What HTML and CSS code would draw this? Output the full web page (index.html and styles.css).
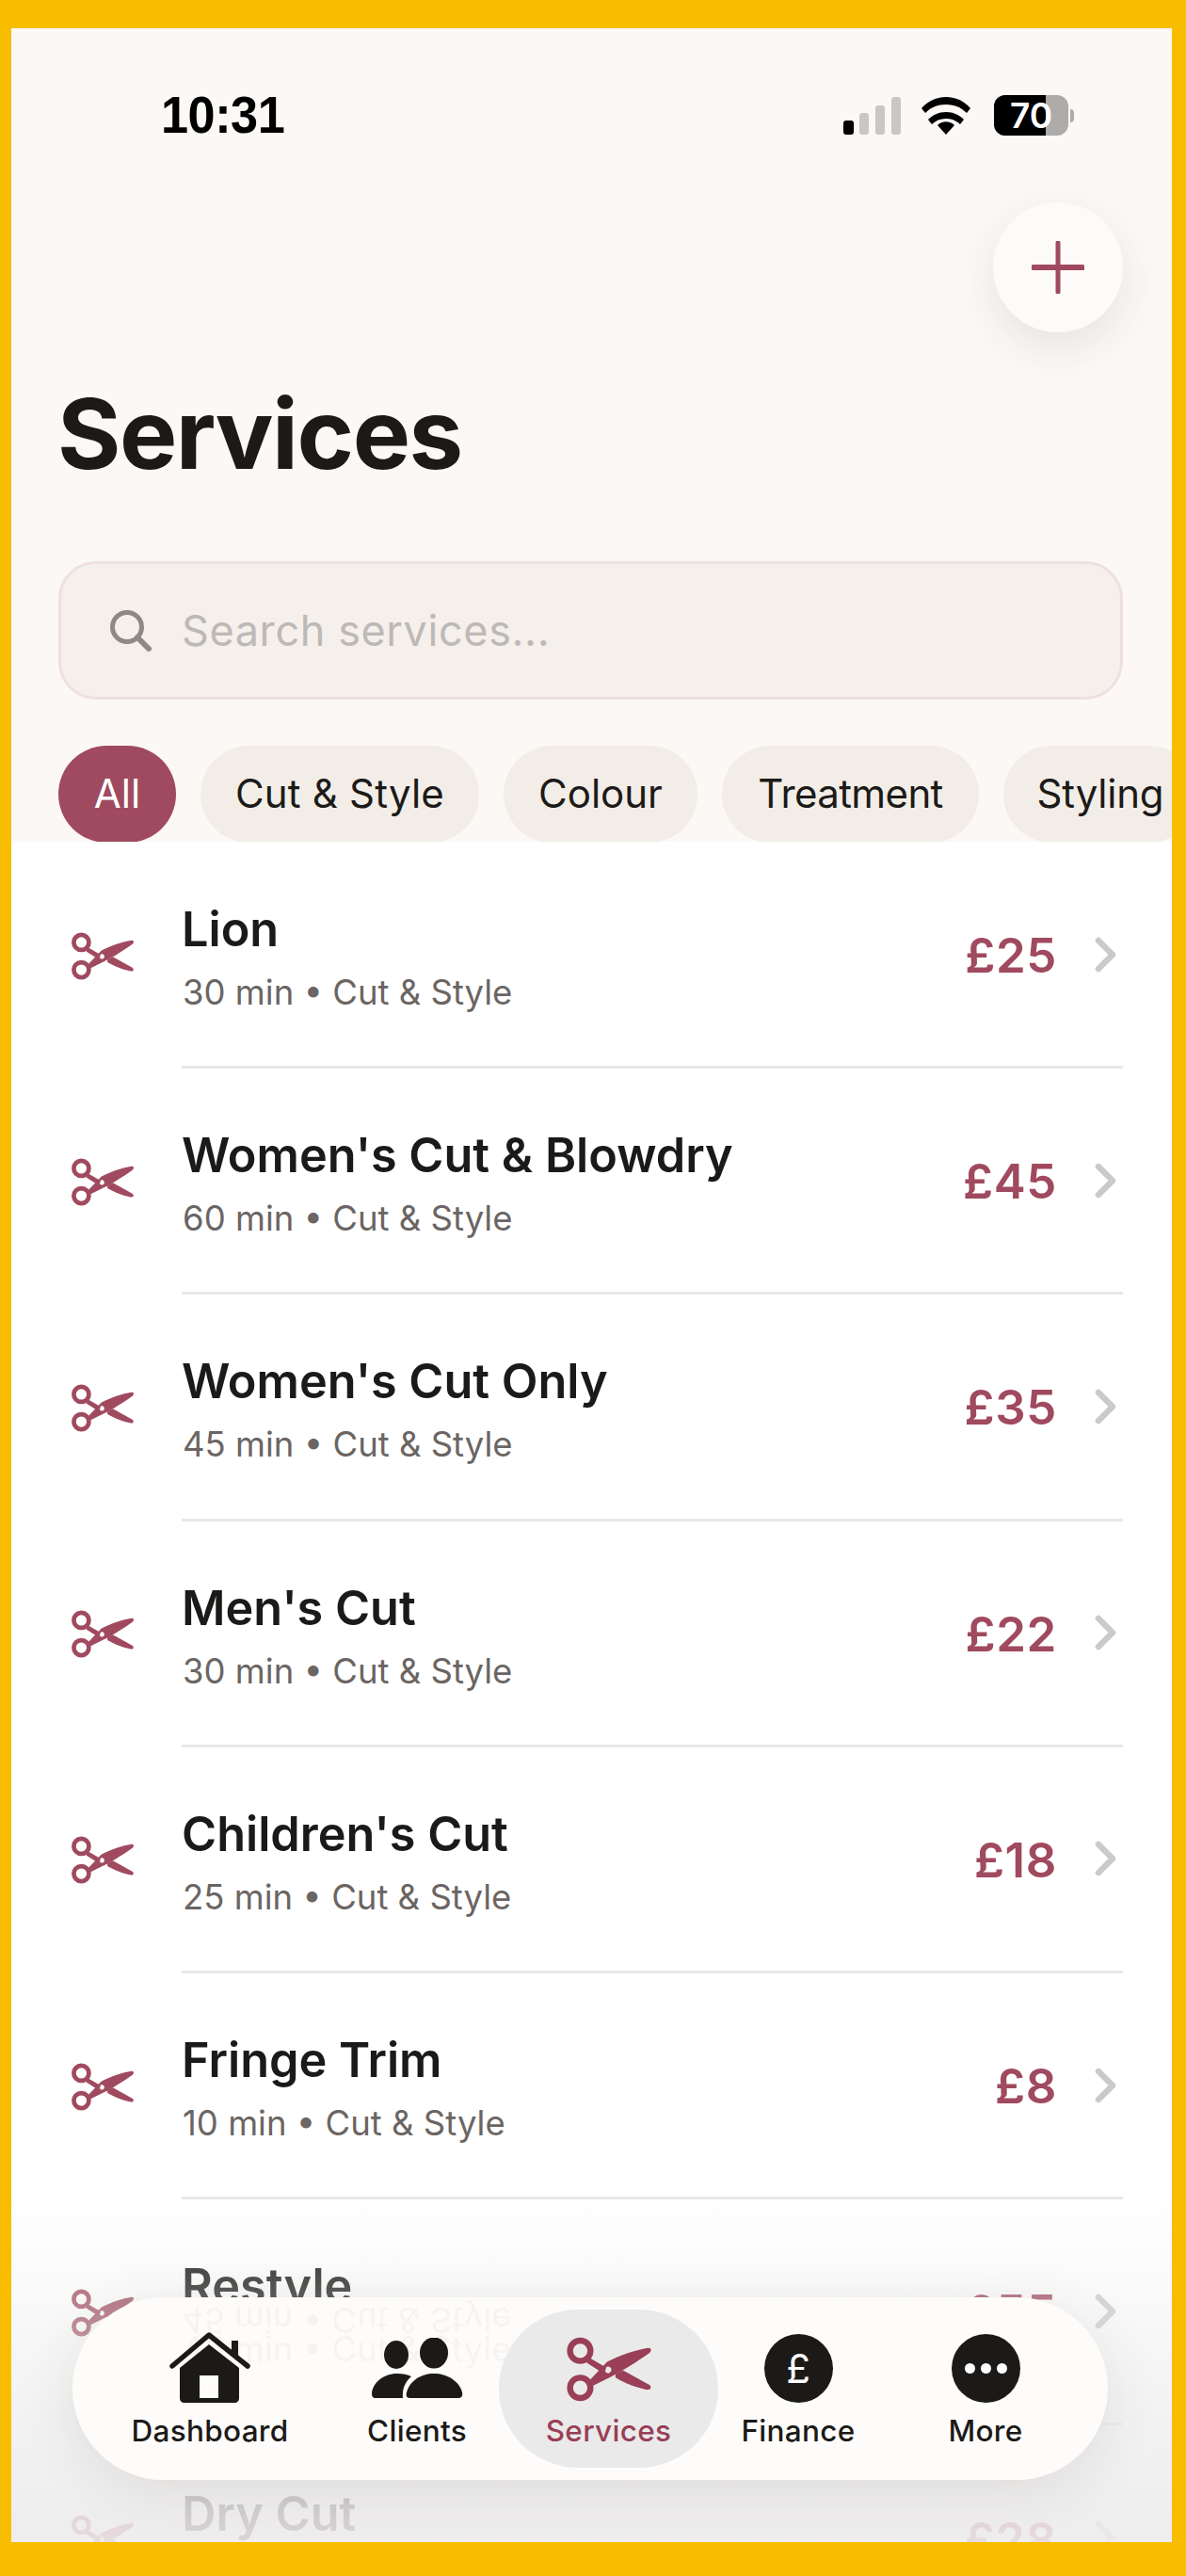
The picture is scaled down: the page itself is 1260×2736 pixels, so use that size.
FILE: index.html
```html
<!DOCTYPE html>
<html lang="en">
<head>
<meta charset="utf-8">
<title>Services</title>
<link rel="stylesheet" href="styles.css">
</head>
<body>
<svg class="defs" width="0" height="0" aria-hidden="true">
  <symbol id="scissors" viewBox="0 0 92 70">
    <circle cx="15" cy="15" r="11" fill="none" stroke="currentColor" stroke-width="6.5"/>
    <circle cx="15" cy="55" r="11" fill="none" stroke="currentColor" stroke-width="6.5"/>
    <path fill="currentColor" d="M24 22 L43 33 L41 40 L22 28 Z"/>
    <path fill="currentColor" fill-rule="evenodd" d="M24 48 L44 27 C58 20 75 14 88 12 C92 12 92 15 90 17 C76 27 60 37 48 43 L28 53 Z M45 32 a3.6 3.6 0 1 0 0.01 0 Z"/>
    <path fill="currentColor" d="M53 40 L61 36 L90 52 C92 55 91 57 87 57 C76 55 63 50 53 44 Z"/>
  </symbol>
</svg>
<main class="screen">
  <header class="top">
    <div class="status">
      <span class="time">10:31</span>
      <div class="status-icons">
        <svg class="signal" viewBox="0 0 62 40"><rect x="0" y="25" width="11" height="15" rx="3" fill="#000"/><rect x="17" y="17" width="10" height="23" rx="3" fill="#c9c6c4"/><rect x="34" y="9" width="10" height="31" rx="3" fill="#c9c6c4"/><rect x="51" y="0" width="10" height="40" rx="3" fill="#c9c6c4"/></svg>
        <svg class="wifi" viewBox="0 0 54 40"><path d="M27 40 L18 30 C23 25 31 25 36 30 Z M27 16 C35 16 41 19 46 24 L42 29 C38 25 33 23 27 23 C21 23 16 25 12 29 L8 24 C13 19 19 16 27 16 Z M27 0 C38 0 47 5 53 12 L49 17 C43 11 36 8 27 8 C18 8 11 11 5 17 L1 12 C7 5 16 0 27 0 Z" fill="#000"/></svg>
        <div class="battery"><div class="battery-body"><div class="battery-fill"></div><span class="battery-num">70</span></div><span class="battery-tip"></span></div>
      </div>
    </div>
    <div class="add-row">
      <button class="add" type="button" aria-label="Add service"><svg viewBox="0 0 56 56"><path d="M28 2 V54" stroke="#a04a5f" stroke-width="5" stroke-linecap="round"/><path d="M2 28 H54" stroke="#a04a5f" stroke-width="6" stroke-linecap="round"/></svg></button>
    </div>
    <h1 class="title">Services</h1>
    <div class="search">
      <svg class="search-icon" viewBox="0 0 46 46"><circle cx="19" cy="19" r="15.5" fill="none" stroke="#8f8886" stroke-width="5"/><path d="M30 30 L42 42" stroke="#8f8886" stroke-width="6" stroke-linecap="round"/></svg>
      <span class="placeholder">Search services...</span>
    </div>
    <div class="chips">
      <span class="chip chip-on">All</span>
      <span class="chip">Cut &amp; Style</span>
      <span class="chip">Colour</span>
      <span class="chip">Treatment</span>
      <span class="chip">Styling</span>
    </div>
  </header>
  <section class="list">
    <article class="row"><svg class="row-icon"><use href="#scissors"/></svg><div class="row-body"><div class="row-text"><div class="name">Lion</div><div class="meta">30 min • Cut &amp; Style</div></div><div class="price">£25</div><svg class="chev" viewBox="0 0 24 38"><path d="M4 4 L19 19 L4 34"/></svg></div></article>
    <article class="row"><svg class="row-icon"><use href="#scissors"/></svg><div class="row-body"><div class="row-text"><div class="name">Women's Cut &amp; Blowdry</div><div class="meta">60 min • Cut &amp; Style</div></div><div class="price">£45</div><svg class="chev" viewBox="0 0 24 38"><path d="M4 4 L19 19 L4 34"/></svg></div></article>
    <article class="row"><svg class="row-icon"><use href="#scissors"/></svg><div class="row-body"><div class="row-text"><div class="name">Women's Cut Only</div><div class="meta">45 min • Cut &amp; Style</div></div><div class="price">£35</div><svg class="chev" viewBox="0 0 24 38"><path d="M4 4 L19 19 L4 34"/></svg></div></article>
    <article class="row"><svg class="row-icon"><use href="#scissors"/></svg><div class="row-body"><div class="row-text"><div class="name">Men's Cut</div><div class="meta">30 min • Cut &amp; Style</div></div><div class="price">£22</div><svg class="chev" viewBox="0 0 24 38"><path d="M4 4 L19 19 L4 34"/></svg></div></article>
    <article class="row"><svg class="row-icon"><use href="#scissors"/></svg><div class="row-body"><div class="row-text"><div class="name">Children's Cut</div><div class="meta">25 min • Cut &amp; Style</div></div><div class="price">£18</div><svg class="chev" viewBox="0 0 24 38"><path d="M4 4 L19 19 L4 34"/></svg></div></article>
    <article class="row"><svg class="row-icon"><use href="#scissors"/></svg><div class="row-body"><div class="row-text"><div class="name">Fringe Trim</div><div class="meta">10 min • Cut &amp; Style</div></div><div class="price">£8</div><svg class="chev" viewBox="0 0 24 38"><path d="M4 4 L19 19 L4 34"/></svg></div></article>
    <article class="row"><svg class="row-icon"><use href="#scissors"/></svg><div class="row-body"><div class="row-text"><div class="name">Restyle</div><div class="meta">45 min • Cut &amp; Style</div></div><div class="price">£55</div><svg class="chev" viewBox="0 0 24 38"><path d="M4 4 L19 19 L4 34"/></svg></div></article>
    <article class="row"><svg class="row-icon"><use href="#scissors"/></svg><div class="row-body"><div class="row-text"><div class="name">Dry Cut</div><div class="meta">20 min • Cut &amp; Style</div></div><div class="price">£28</div><svg class="chev" viewBox="0 0 24 38"><path d="M4 4 L19 19 L4 34"/></svg></div></article>
  </section>
  <div class="fade"></div>
  <nav class="nav">
    <div class="ghost" aria-hidden="true"><span class="ghost-flip">45 min • Cut &amp; Style</span><span class="ghost-low">45 min • Cut &amp; Style</span></div>
    <a class="tab"><svg class="tab-icon" viewBox="0 0 86 76"><path fill="#1c1a18" d="M66 9 H73 V27 L66 20 Z"/><path fill="none" stroke="#1c1a18" stroke-width="5.5" stroke-linecap="round" stroke-linejoin="round" d="M3 36 L42 3 L83 36"/><path fill="#1c1a18" fill-rule="evenodd" d="M42 13 L74 38 V70 C74 73 72 75 69 75 H16 C13 75 11 73 11 70 V38 Z M32 46 V70 H52 V46 Z"/></svg><span class="tab-label">Dashboard</span></a>
    <a class="tab"><svg class="tab-icon tab-clients" viewBox="0 0 97 64"><ellipse cx="26" cy="18" rx="13" ry="15" fill="#1c1a18"/><ellipse cx="66" cy="16" rx="15" ry="16.5" fill="#1c1a18"/><path fill="#1c1a18" d="M4 64 C1 64 0 62 0 59 C1 48 12 38 27 38 C33 38 38 39 42 41 C36 46 32 54 33 64 Z"/><path fill="#1c1a18" d="M41 64 C37 64 36 62 37 58 C40 46 52 38 66 38 C80 38 93 46 96 58 C97 62 95 64 92 64 Z"/></svg><span class="tab-label">Clients</span></a>
    <a class="tab tab-on"><svg class="tab-icon tab-scissors"><use href="#scissors"/></svg><span class="tab-label">Services</span></a>
    <a class="tab"><span class="round"><span class="round-pound">£</span></span><span class="tab-label">Finance</span></a>
    <a class="tab"><span class="round"><span class="dots"><i></i><i></i><i></i></span></span><span class="tab-label">More</span></a>
  </nav>
</main>
</body>
</html>
```
FILE: styles.css
```css
* { box-sizing: border-box; }
html, body { margin: 0; height: 2736px; }
body { background: #f9bd00; font-family: Inter, "Noto Sans", sans-serif; color: #1c1a18; }
.defs { position: absolute; }
.screen { position: relative; margin: 30px 15px 36px 12px; height: 2670px; background: #fff; overflow: hidden; display: flex; flex-direction: column; }
.top { background: #fbf8f5; height: 864px; flex: none; padding: 0 52px 0 50px; overflow: hidden; }
.status { display: flex; justify-content: space-between; align-items: center; height: 45px; margin-top: 70px; padding: 0 0 0 109px; width: 1100px; }
.time { font-family: "Liberation Sans", sans-serif; font-size: 55px; font-weight: 700; color: #000; letter-spacing: -0.5px; transform: scaleX(.95); transform-origin: left center; line-height: 45px; }
.status-icons { display: flex; align-items: center; gap: 20px; padding-right: 21px; }
.signal { width: 62px; height: 40px; display: block; }
.wifi { width: 54px; height: 40px; display: block; }
.battery { display: flex; align-items: center; gap: 2px; margin-left: 4px; }
.battery-body { position: relative; width: 79px; height: 43px; border-radius: 12px; background: #adacaa; overflow: hidden; display: flex; align-items: center; justify-content: center; }
.battery-fill { position: absolute; left: 0; top: 0; bottom: 0; width: 55px; background: #000; }
.battery-num { position: relative; color: #fff; font-size: 37px; font-weight: 600; font-family: Inter, sans-serif; line-height: 1; }
.battery-tip { width: 4px; height: 14px; background: #adacaa; border-radius: 0 4px 4px 0; }
.add-row { display: flex; justify-content: flex-end; margin-top: 70px; }
.add { width: 138px; height: 138px; border-radius: 50%; border: 0; padding: 0; background: #fcfbf9; box-shadow: 0 16px 46px rgba(60,50,45,.1); display: flex; align-items: center; justify-content: center; }
.add svg { width: 56px; height: 56px; display: block; }
.title { margin: 46px 0 0 -1px; font-size: 103px; line-height: 124px; font-weight: 700; letter-spacing: -1.5px; color: #1c1a18; }
.search { margin-top: 73px; height: 147px; border: 3px solid #eee0e1; background: #f5f0eb; border-radius: 40px; display: flex; align-items: center; padding-left: 51px; gap: 31px; }
.search-icon { width: 46px; height: 46px; flex: none; }
.placeholder { font-size: 45px; color: #bdb9b6; letter-spacing: .6px; }
.chips { display: flex; gap: 26px; margin-top: 49px; white-space: nowrap; }
.chip { height: 103px; flex: none; border-radius: 52px; background: #f2ede7; display: flex; align-items: center; justify-content: center; font-size: 42px; color: #1c1a18; padding-bottom: 2px; }
.chip:nth-child(1) { width: 125px; }
.chip:nth-child(2) { width: 296px; letter-spacing: .2px; }
.chip:nth-child(3) { width: 206px; }
.chip:nth-child(4) { width: 273px; letter-spacing: -.6px; }
.chip:nth-child(5) { width: 206px; letter-spacing: -.2px; }
.chip-on { background: #a04a5f; color: #fff; }
.list { flex: 1; padding: 1px 52px 0 50px; min-height: 0; }
.row { display: flex; align-items: stretch; height: 240.2px; }
.row-icon { width: 68px; height: 51px; color: #a04a5f; margin-left: 13px; flex: none; align-self: center; }
.row-body { flex: 1; margin-left: 50px; display: flex; align-items: center; border-bottom: 3px solid #e9e8e7; min-width: 0; }
.row:last-child .row-body { border-bottom: 0; }
.row-text { flex: 1; min-width: 0; padding-top: 6px; }
.name { font-size: 50.4px; line-height: 62px; font-weight: 600; color: #1c1a18; }
.meta { font-size: 36.5px; line-height: 46px; color: #6b6563; margin-top: 13px; margin-left: 1px; }
.price { font-size: 51px; font-weight: 600; color: #a04a5f; margin-right: 40px; letter-spacing: .6px; margin-top: 2px; }
.chev { width: 24px; height: 38px; margin-right: 6px; flex: none; }
.chev path { fill: none; stroke: #cbcac9; stroke-width: 6.5; stroke-linecap: round; stroke-linejoin: round; }
.fade { position: absolute; left: 0; right: 0; bottom: 0; height: 370px; background: linear-gradient(to bottom, rgba(238,237,236,0) 0%, rgba(238,237,236,.26) 25%, rgba(238,237,236,.6) 55%, rgba(237,235,235,.86) 90%, rgba(237,235,235,.9) 100%); pointer-events: none; }
.nav { position: absolute; left: 65px; top: 2410px; width: 1100px; height: 194px; border-radius: 97px; background: #fdfcfb; box-shadow: 0 10px 60px rgba(60,55,50,.1); display: grid; grid-template-columns: 266px 174px 233px 170px 228px; padding: 13px 16px 13px 13px; align-items: stretch; overflow: hidden; }
.ghost { position: absolute; left: 116px; top: 0; width: 400px; height: 100px; color: rgba(160,74,95,.05); font-size: 36.5px; pointer-events: none; filter: blur(.6px); }
.ghost-flip { position: absolute; left: 0; top: 2px; transform: scaleY(-1); white-space: nowrap; }
.ghost-low { position: absolute; left: 0; top: 33px; white-space: nowrap; }
.tab { position: relative; display: flex; flex-direction: column; align-items: center; justify-content: flex-start; padding-top: 24px; border-radius: 84px; }
.tab-on { background: #ebeaea; color: #993f57; }
.tab-icon { width: 86px; height: 76px; display: block; flex: none; }
.tab-clients { width: 97px; height: 64px; margin: 6px 0; }
.tab-scissors { width: 92px; height: 69px; margin: 5px 0 2px; color: #993f57; }
.tab-label { font-size: 31.5px; line-height: 40px; font-weight: 500; margin-top: 9px; letter-spacing: .3px; color: #1c1a18; }
.tab-on .tab-label { color: #993f57; }
.round { width: 73px; height: 73px; border-radius: 50%; background: #1c1a18; display: flex; align-items: center; justify-content: center; margin: 2px 0 1px; flex: none; }
.round-pound { color: #fff; font-size: 42px; line-height: 1; font-weight: 400; }
.dots { display: flex; gap: 6px; }
.dots i { width: 11px; height: 11px; border-radius: 50%; background: #fff; display: block; }
```
